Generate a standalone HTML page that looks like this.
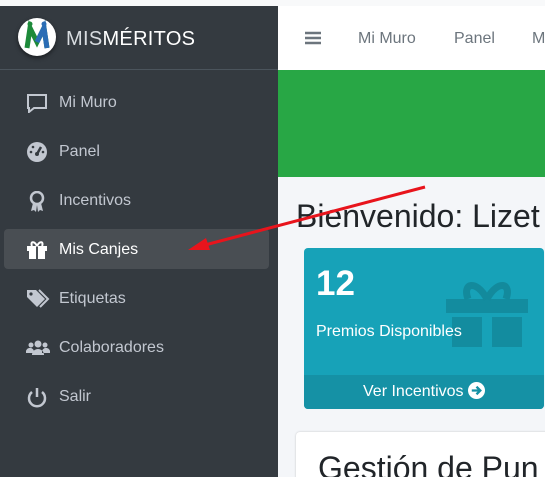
<!DOCTYPE html><html><head><meta charset="utf-8"><style>
html,body{margin:0;width:545px;height:477px;overflow:hidden}
body{background:#f4f6f9;font-family:"Liberation Sans",sans-serif;position:relative}
.top{position:absolute;left:0;top:0;width:545px;height:6px;background:#f8f9fa}
.sb{position:absolute;left:0;top:6px;width:278px;height:471px;background:#343a40}
.brand{height:63px;border-bottom:1px solid #4b545c;position:relative}
.logo{position:absolute;left:18px;top:12px;width:38px;height:38px;border-radius:50%;background:#fff;box-shadow:0 2px 4px rgba(0,0,0,.5)}
.bt{position:absolute;left:66px;top:22px;font-size:20px;color:#d8dce0;letter-spacing:.3px}
.item{position:absolute;left:4px;width:265px;height:40px;color:#c2c7d0;font-size:16px;line-height:42px;border-radius:4px}
.item span{position:absolute;left:55px}
.item svg{position:absolute;left:22px;top:11px}
.act{background:#494e53;color:#fff}
.nav{position:absolute;left:278px;top:6px;width:267px;height:64px;background:#fff;border-bottom:1px solid #dee2e6;color:#6c757d;font-size:16px}
.nav span{position:absolute;top:24px}
.green{position:absolute;left:278px;top:70px;width:267px;height:107px;background:#28a745}
h1{position:absolute;left:296px;top:198px;margin:0;font-weight:normal;font-size:32px;color:#212529;white-space:nowrap}
.card{position:absolute;left:304px;top:248px;width:240px;height:161px;background:#17a2b8;border-radius:4px;overflow:hidden;color:#fff}
.foot{position:absolute;left:0;bottom:0;width:100%;height:34px;background:#1591a5;text-align:center;line-height:34px;font-size:16px}
.card2{position:absolute;left:296px;top:432px;width:260px;height:60px;background:#fff;border-radius:4px;box-shadow:0 0 2px rgba(0,0,0,.2)}
</style></head><body>
<div class="top"></div>
<div class="sb">
<div class="brand"><div class="logo"><svg width="38" height="38" viewBox="0 0 38 38"><path d="M9 30 L12 10 L19 24 L26 10 L29 30" fill="none" stroke="#1d8a3a" stroke-width="5"/><path d="M19 24 L26 10 L29 30" fill="none" stroke="#2a6db5" stroke-width="5"/><circle cx="12" cy="6" r="2.5" fill="#1d8a3a"/><circle cx="26" cy="6" r="2.5" fill="#2a6db5"/></svg></div><div class="bt">MIS<span style="color:#fff">MÉRITOS</span></div></div>
<div class="item" style="top:76px"><svg width="22" height="20" viewBox="0 0 22 20"><path d="M2 2h18v13H8l-5 4v-4H2z" fill="none" stroke="#c2c7d0" stroke-width="2"/></svg><span>Mi Muro</span></div>
<div class="item" style="top:125px"><svg width="22" height="20" viewBox="0 0 22 20"><circle cx="11" cy="10" r="10" fill="#c2c7d0"/><path d="M11 12L15 5" stroke="#343a40" stroke-width="2.5"/><circle cx="11" cy="12" r="2" fill="#343a40"/><circle cx="5" cy="10" r="1.3" fill="#343a40"/><circle cx="7" cy="5" r="1.3" fill="#343a40"/><circle cx="17" cy="10" r="1.3" fill="#343a40"/></svg><span>Panel</span></div>
<div class="item" style="top:174px"><svg width="22" height="22" viewBox="0 0 22 22"><circle cx="11" cy="7" r="6" fill="none" stroke="#c2c7d0" stroke-width="2.5"/><path d="M7 12l-2 8 3-1 2 2 1-7M15 12l2 8-3-1-2 2-1-7" fill="#c2c7d0"/></svg><span>Incentivos</span></div>
<div class="item act" style="top:223px"><svg width="22" height="20" viewBox="0 0 22 20"><path d="M1 6h20v5H1zM3 11h16v8H3z" fill="#fff"/><path d="M11 6v13" stroke="#494e53" stroke-width="2"/><path d="M11 6C8 0 4 2 6 6M11 6c3-6 7-4 5 0" fill="none" stroke="#fff" stroke-width="2"/></svg><span>Mis Canjes</span></div>
<div class="item" style="top:272px"><svg width="24" height="20" viewBox="0 0 24 20"><path d="M1 1h9l9 9-8 8-10-10z" fill="#c2c7d0"/><circle cx="5" cy="5" r="1.6" fill="#343a40"/><path d="M13 1l9 9-8 8" fill="none" stroke="#c2c7d0" stroke-width="2"/></svg><span>Etiquetas</span></div>
<div class="item" style="top:321px"><svg width="24" height="20" viewBox="0 0 24 20"><circle cx="12" cy="6" r="3.5" fill="#c2c7d0"/><circle cx="5" cy="7" r="2.5" fill="#c2c7d0"/><circle cx="19" cy="7" r="2.5" fill="#c2c7d0"/><path d="M6 17a6 6 0 0 1 12 0zM0 15a4 4 0 0 1 8-2v2zM24 15a4 4 0 0 0-8-2v2z" fill="#c2c7d0"/></svg><span>Colaboradores</span></div>
<div class="item" style="top:370px"><svg width="22" height="22" viewBox="0 0 22 22"><path d="M6 5a8 8 0 1 0 10 0" fill="none" stroke="#c2c7d0" stroke-width="2.5"/><path d="M11 1v9" stroke="#c2c7d0" stroke-width="2.5"/></svg><span>Salir</span></div>
</div>
<div class="nav"><svg style="position:absolute;left:27px;top:25px" width="16" height="14"><path d="M0 2h16M0 7h16M0 12h16" stroke="#6c757d" stroke-width="2.5"/></svg><span style="left:80px">Mi Muro</span><span style="left:176px">Panel</span><span style="left:254px">M</span></div>
<div class="green"></div>
<h1>Bienvenido: Lizet</h1>
<div class="card">
<div style="position:absolute;left:12px;top:16px;font-size:35px;font-weight:bold">12</div>
<svg style="position:absolute;left:142px;top:29px" width="82" height="72" viewBox="0 0 82 72"><path d="M0 22h82v14H0zM6 40h30v30H6zM46 40h30v30H46z" fill="#138a9c" opacity=".9"/><path d="M41 22C30 2 16 6 22 22M41 22c11-20 25-16 19 0" fill="none" stroke="#138a9c" stroke-width="7"/></svg>
<div style="position:absolute;left:12px;top:75px;font-size:16px">Premios Disponibles</div>
<div class="foot">Ver Incentivos <svg width="17" height="17" style="vertical-align:-3px" viewBox="0 0 18 18"><circle cx="9" cy="9" r="9" fill="#fff"/><path d="M4 9h8M9 5l4 4-4 4" stroke="#1591a5" stroke-width="2.5" fill="none"/></svg></div>
</div>
<div class="card2"><div style="position:absolute;left:22px;top:18px;font-size:32px;color:#212529;white-space:nowrap">Gestión de Pun</div></div>
<svg style="position:absolute;left:0;top:0" width="545" height="477"><path d="M425 187L205 245" stroke="#e8141c" stroke-width="3"/><path d="M188 250l18-12 4 12z" fill="#e8141c"/></svg>
</body></html>
